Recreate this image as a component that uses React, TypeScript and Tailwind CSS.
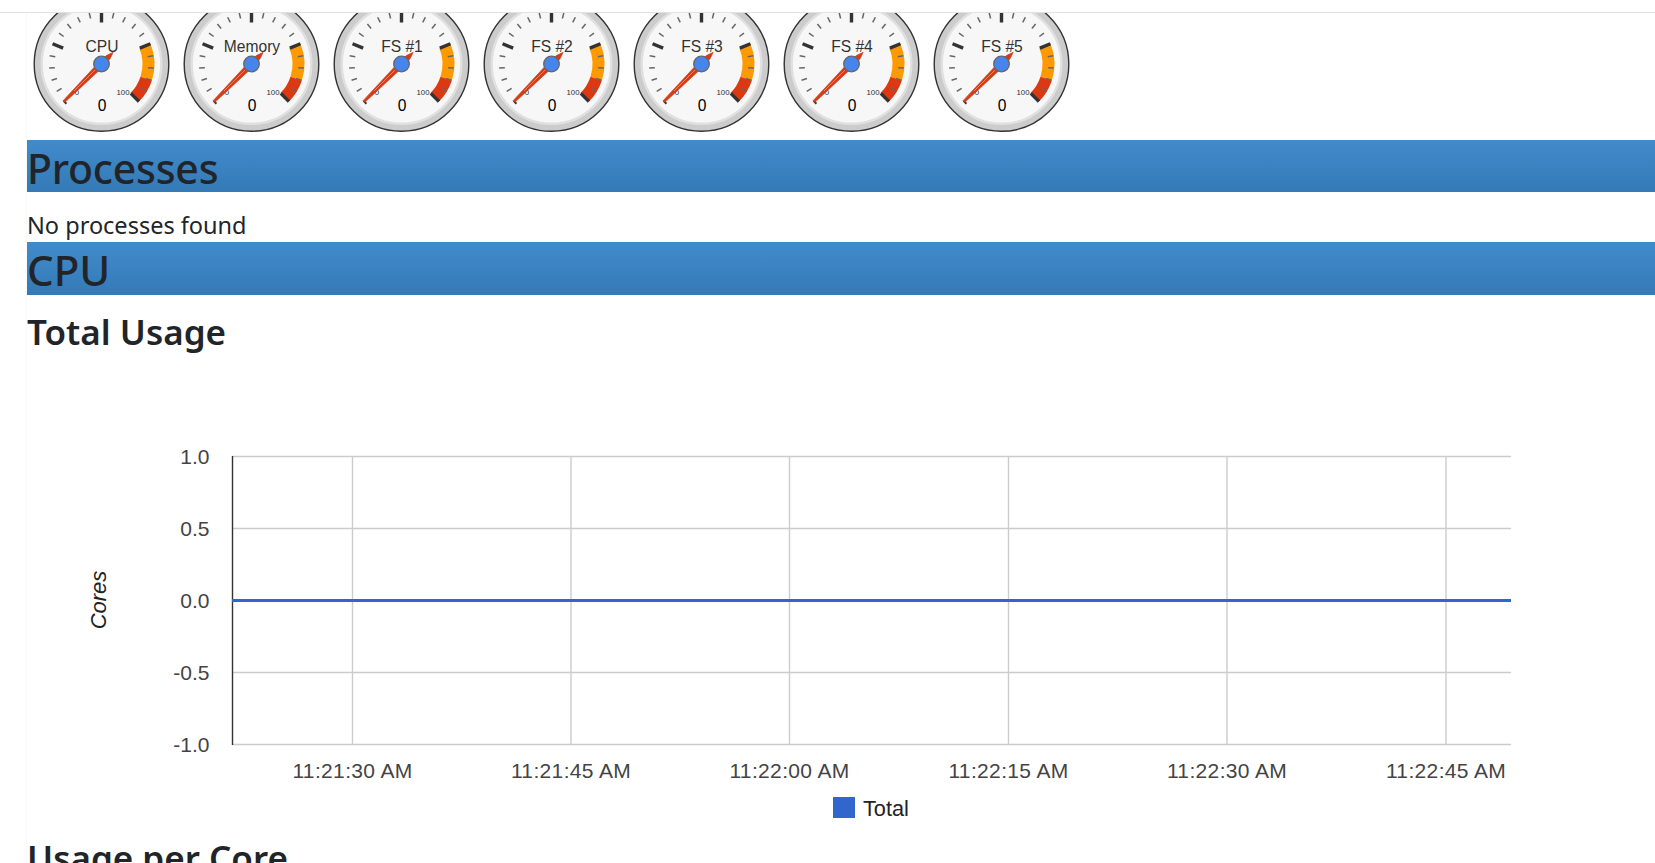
import React from "react";

const CX = 74.5;
const CY = 75;

function polar(r: number, value: number) {
  const a = ((value / 100) * 270 - 135) * (Math.PI / 180);
  return [CX + r * Math.sin(a), CY - r * Math.cos(a)];
}

function band(from: number, to: number, r0: number, r1: number) {
  const [ax, ay] = polar(r1, from);
  const [bx, by] = polar(r1, to);
  const [cx, cy] = polar(r0, to);
  const [dx, dy] = polar(r0, from);
  return `M${ax} ${ay}A${r1} ${r1} 0 0 1 ${bx} ${by}L${cx} ${cy}A${r0} ${r0} 0 0 0 ${dx} ${dy}Z`;
}

// A point on the needle: d along its axis from the hub, w across it.
function np(d: number, w: number) {
  const k = Math.SQRT1_2;
  return `${(CX + k * d + k * w).toFixed(2)} ${(CY - k * d + k * w).toFixed(2)}`;
}

const needlePath = `M${np(-53, -1.2)}L${np(0, -3.1)}L${np(10, -2.3)}L${np(16.5, 0)}L${np(10, 2.3)}L${np(0, 3.1)}L${np(-53, 1.2)}Z`;

function Gauge({ label }: { label: string }) {
  const majors = [25, 50, 75, 100];
  const minors: number[] = [];
  for (let i = 0; i < 100; i += 5) if (i % 25 !== 0) minors.push(i);
  return (
    <svg width="150" height="150" viewBox="0 0 150 150" className="-mt-[24px] shrink-0">
      <circle cx={CX} cy={CY} r="67.3" fill="#cccccc" stroke="#333333" strokeWidth="1.4" />
      <circle cx={CX} cy={CY} r="59.8" fill="#f7f7f7" stroke="#e0e0e0" strokeWidth="2.4" />
      <path d={band(75, 90, 41, 53)} fill="#ff9900" />
      <path d={band(90, 100, 41, 53)} fill="#dc3912" />
      {minors.map((v) => {
        const [x1, y1] = polar(46.8, v);
        const [x2, y2] = polar(52.5, v);
        return <line key={v} x1={x1} y1={y1} x2={x2} y2={y2} stroke="#666666" strokeWidth="1.5" />;
      })}
      {majors.map((v) => {
        const [x1, y1] = polar(41.5, v);
        const [x2, y2] = polar(53, v);
        return <line key={v} x1={x1} y1={y1} x2={x2} y2={y2} stroke="#333333" strokeWidth="3.4" />;
      })}
      <text x={CX + 0.5} y="63" textAnchor="middle" fontFamily="'Liberation Sans', sans-serif" fontSize="15.6" fill="#333333">{label}</text>
      <text x="50" y="106" textAnchor="middle" fontFamily="'Liberation Sans', sans-serif" fontSize="7.8" fill="#333333">0</text>
      <text x="96" y="106" textAnchor="middle" fontFamily="'Liberation Sans', sans-serif" fontSize="7.8" fill="#333333">100</text>
      <text x={CX + 0.5} y="121.5" textAnchor="middle" fontFamily="'Liberation Sans', sans-serif" fontSize="15.6" fill="#000000">0</text>
      <line x1="36.6" y1="111.9" x2="39.4" y2="114.7" stroke="#333333" strokeWidth="2" />
      <path d={needlePath} fill="#dc3912" stroke="#b5472c" strokeWidth="0.7" />
      <line x1="47" y1="102" x2="68" y2="81" stroke="#ea8f78" strokeWidth="0.9" />
      <circle cx={CX} cy={CY} r="7.8" fill="#4684ee" stroke="#666666" strokeWidth="1.3" />
    </svg>
  );
}

export default function App() {
  const labels = ["CPU", "Memory", "FS #1", "FS #2", "FS #3", "FS #4", "FS #5"];
  const vx = [352.5, 571, 789.5, 1008.5, 1227, 1446];
  const times = ["11:21:30 AM", "11:21:45 AM", "11:22:00 AM", "11:22:15 AM", "11:22:30 AM", "11:22:45 AM"];
  const hy = [456.5, 528.5, 600.5, 672.5, 744.5];
  const ylabels = ["1.0", "0.5", "0.0", "-0.5", "-1.0"];
  return (
    <div className="h-[863px] overflow-hidden bg-white font-['Noto_Sans',sans-serif] text-[#212529]">
      <div className="h-[13px] border-b border-[#e2e2e2]" />
      <main className="ml-[26px] border-l border-[#f9f9f9]">
        <div className="flex h-[127px] overflow-hidden">
          {labels.map((l) => (
            <Gauge key={l} label={l} />
          ))}
        </div>
        <h2 className="h-[52px] bg-gradient-to-b from-[#428bca] to-[#337ab7] text-[41px] font-medium leading-[56px] tracking-[-0.25px]">Processes</h2>
        <p className="mt-[15px] h-[35px] text-[23.5px] leading-[36px]">No processes found</p>
        <h2 className="h-[53px] bg-gradient-to-b from-[#428bca] to-[#337ab7] text-[42px] font-medium leading-[55px]">CPU</h2>
        <h3 className="mt-[14px] h-[56px] text-[35px] font-semibold leading-[46px]">Total Usage</h3>
        <svg width="1628" height="470" viewBox="27 365 1628 470" className="block">
          {hy.map((y) => (
            <line key={y} x1="232" x2="1511" y1={y} y2={y} stroke="#cccccc" strokeWidth="1.4" />
          ))}
          {vx.map((x) => (
            <line key={x} x1={x} x2={x} y1="456" y2="745" stroke="#cccccc" strokeWidth="1.4" />
          ))}
          <line x1="232.5" x2="232.5" y1="456" y2="745" stroke="#333333" strokeWidth="1.4" />
          <line x1="232" x2="1511" y1="600.5" y2="600.5" stroke="#3366cc" strokeWidth="3" />
          <g fontFamily="'Liberation Sans', sans-serif" fontSize="21" fill="#444444">
            {ylabels.map((t, i) => (
              <text key={t} x="209.5" y={hy[i] + 7} textAnchor="end">{t}</text>
            ))}
            {times.map((t, i) => (
              <text key={t} x={vx[i]} y="778" textAnchor="middle" letterSpacing="0.35">{t}</text>
            ))}
          </g>
          <text transform="translate(106 600) rotate(-90)" textAnchor="middle" fontFamily="'Liberation Sans', sans-serif" fontStyle="italic" fontSize="22" fill="#222222">Cores</text>
          <rect x="833" y="797" width="22" height="21" fill="#3366cc" />
          <text x="863" y="815.5" fontFamily="'Liberation Sans', sans-serif" fontSize="21.7" fill="#222222">Total</text>
        </svg>
        <h3 className="text-[35px] font-semibold leading-[46px]">Usage per Core</h3>
      </main>
    </div>
  );
}
